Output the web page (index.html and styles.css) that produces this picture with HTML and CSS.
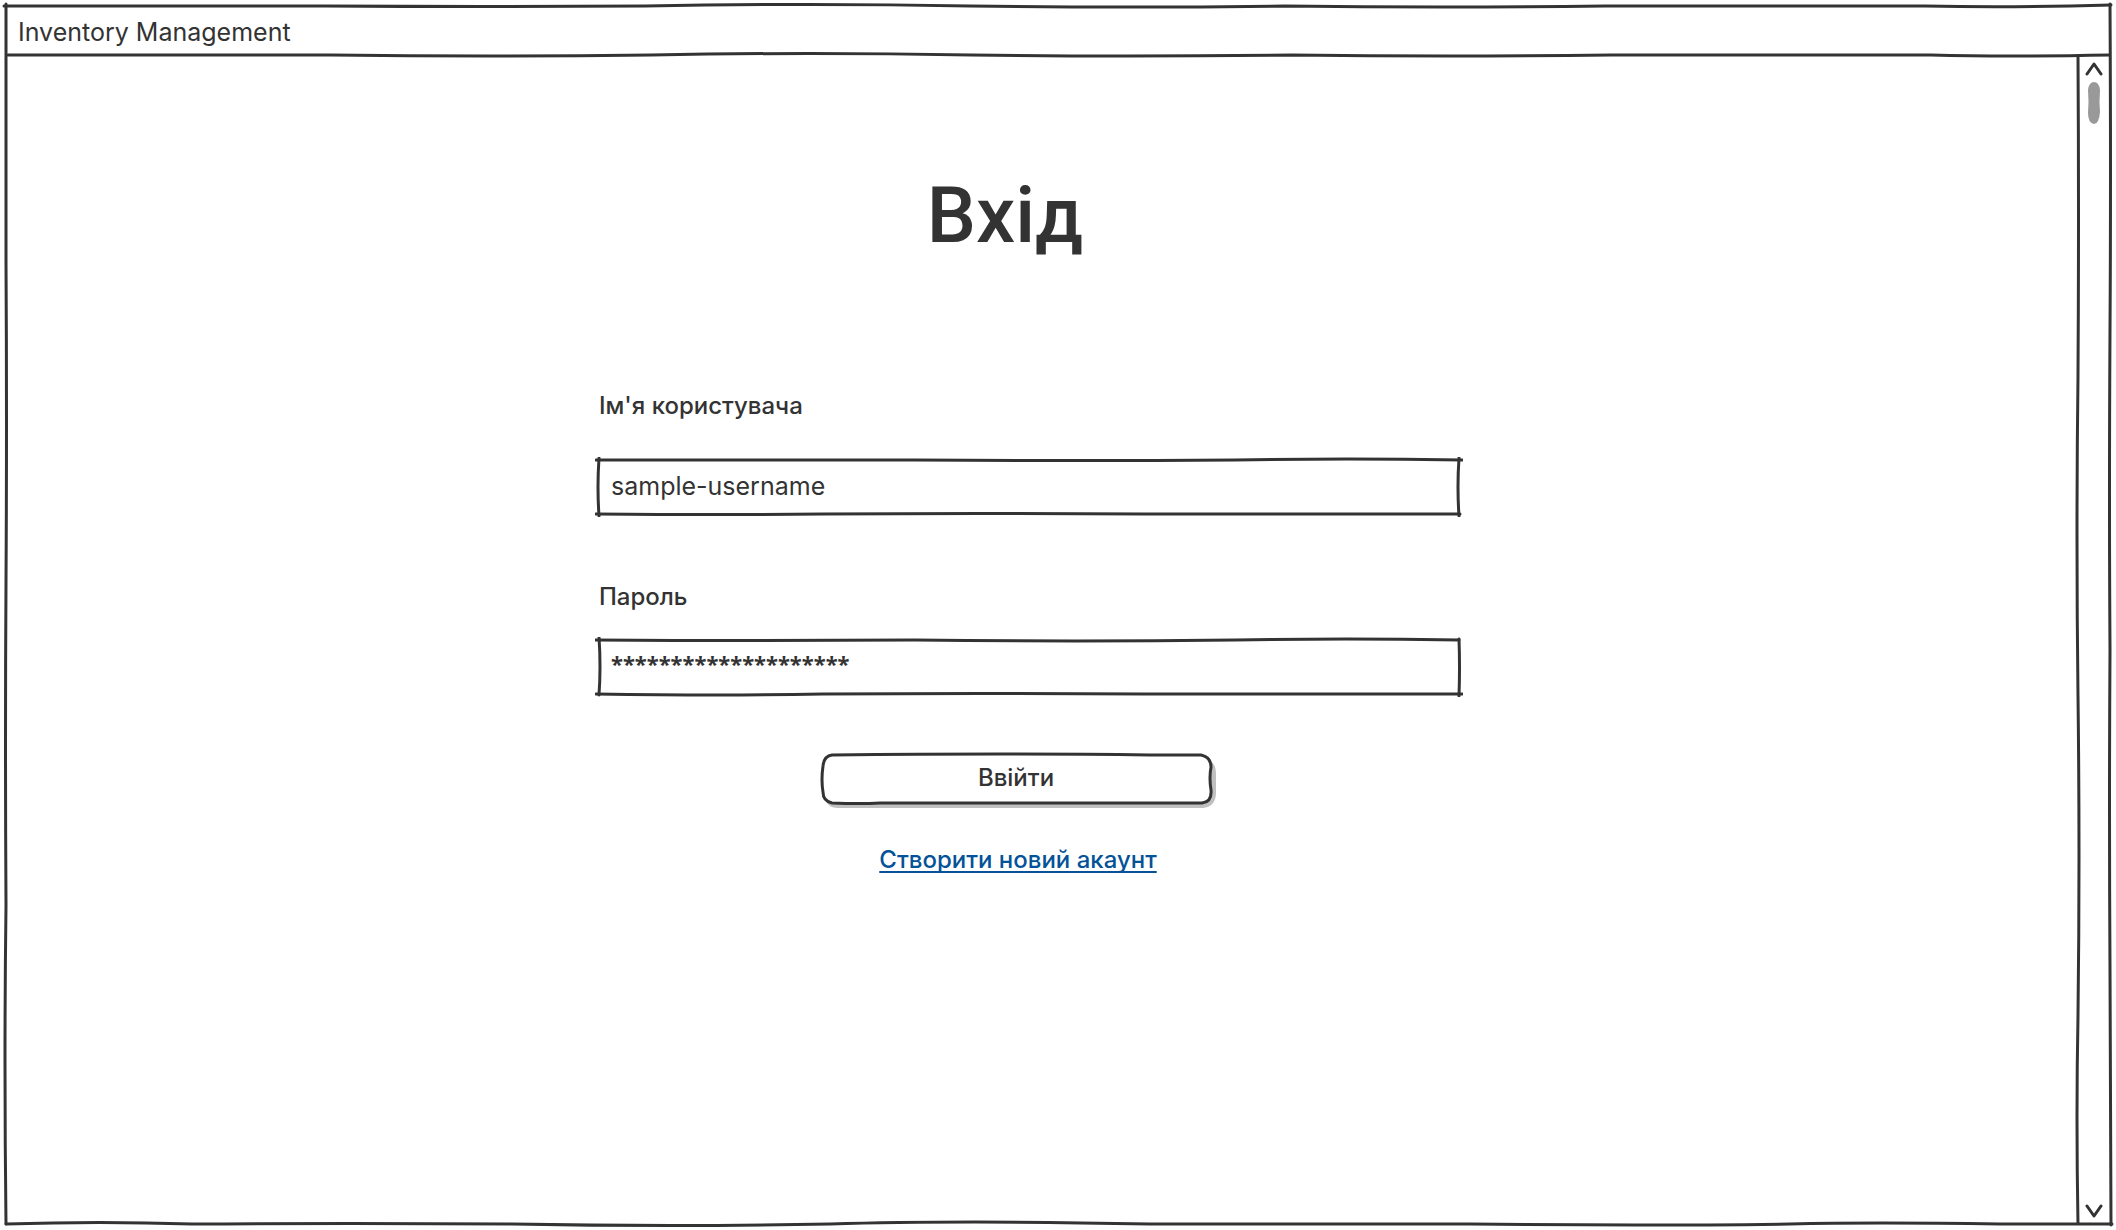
FILE: index.html
```html
<!DOCTYPE html>
<html lang="uk">
<head>
<meta charset="utf-8">
<meta name="viewport" content="width=device-width, initial-scale=1">
<title>Inventory Management</title>
<link rel="stylesheet" href="styles.css">
</head>
<body>
<div class="window">
  <svg class="sketch" viewBox="0 0 2116 1230" preserveAspectRatio="none" aria-hidden="true">
    <path d="M4 6 L325 6 Q480 7 645 6 Q810 3 970 6 Q1130 8 1285 6 Q1440 8 1605 6 L1925 6 Q2010 8 2111 5"/>
    <path d="M6 4 L6 262 Q7 420 6 582 Q5 740 6 905 Q4 1060 6 1224"/>
    <path d="M2110 4 Q2111 180 2110 330 Q2109 500 2110 650 Q2109 810 2110 970 L2111 1225"/>
    <path d="M6 1224 Q100 1221 192 1224 Q350 1223 512 1224 Q670 1227 830 1224 Q960 1220 1150 1224 L1470 1224 Q1640 1226 1790 1224 Q1870 1222 2000 1224 L2112 1224"/>
  </svg>
  <header class="titlebar">
    <span class="app-name">Inventory Management</span>
    <svg class="rule" viewBox="0 0 2104 6" preserveAspectRatio="none" aria-hidden="true">
      <path d="M2 3 L325 3 Q480 5 645 3 Q800 0 965 3 Q1120 5 1285 3 Q1440 5 1605 3 L1925 3 Q2000 5 2104 3"/>
    </svg>
  </header>
  <div class="body">
    <main class="content">
      <form class="login">
        <h1 class="heading">Вхід</h1>
        <label class="label" for="username">Ім'я користувача</label>
        <div class="field">
          <svg class="sketch" viewBox="0 0 868 60" preserveAspectRatio="none" aria-hidden="true">
            <path d="M1 3 L320 3 Q480 4 640 3 Q750 1 867 3"/>
            <path d="M1 57 Q130 58 228 57 Q380 56 550 57 L865 57"/>
            <path d="M4 1 Q2 30 4 59"/>
            <path d="M864 1 Q862 30 864 59"/>
          </svg>
          <input class="input" id="username" type="text" value="sample-username">
        </div>
        <label class="label label-tight" for="password">Пароль</label>
        <div class="field field-last">
          <svg class="sketch" viewBox="0 0 868 60" preserveAspectRatio="none" aria-hidden="true">
            <path d="M0 3 Q160 4 320 3 Q480 5 640 3 Q750 1 864 3"/>
            <path d="M1 57 Q130 59 228 57 Q380 56 550 57 L867 57"/>
            <path d="M4 0 Q6 30 4 58"/>
            <path d="M864 2 Q865 30 864 59"/>
          </svg>
          <input class="input masked" id="password" type="text" value="********************">
        </div>
        <div class="actions">
          <button class="submit" type="submit">
            <svg class="sketch" viewBox="0 0 396 56" preserveAspectRatio="none" aria-hidden="true">
              <path class="shadow" d="M14 7 H384 Q396 8 396 22 V42 Q395 55 383 56 H18 Q8 56 6 48 Z"/>
              <path class="outline" d="M12 3 Q190 1 330 3 L381 3 Q391 5 391 15 Q389 26 391 38 Q392 50 382 51 L60 51 Q40 52 12 51 Q3 49 3 40 Q1 28 3 14 Q4 4 12 3 Z"/>
            </svg>
            <span class="caption">Ввійти</span>
          </button>
          <a class="link" href="#register">Створити новий акаунт</a>
        </div>
      </form>
    </main>
    <div class="scrollbar" aria-hidden="true">
      <svg class="divider" viewBox="0 0 6 1168" preserveAspectRatio="none">
        <path d="M3 0 Q4 160 3 320 Q1 480 3 640 Q5 800 3 960 Q1 1060 3 1168"/>
      </svg>
      <svg class="arrow" viewBox="0 0 18 14"><path d="M2 12 L9 2 L16 12"/></svg>
      <svg class="thumb" viewBox="0 0 12 42"><path d="M0 8 Q1 0 6 0 Q11 0 12 8 Q11 20 12 30 Q11 42 6 42 Q0 41 0 31 Q1 20 0 8 Z"/></svg>
      <svg class="arrow down" viewBox="0 0 18 14"><path d="M2 2 L9 12 L16 2"/></svg>
    </div>
  </div>
</div>
</body>
</html>
```
FILE: styles.css
```css
* {
  box-sizing: border-box;
}

body {
  margin: 0;
  background: #fff;
  color: #333;
  font-family: Inter, "Noto Sans", sans-serif;
  font-size: 24px;
  font-weight: 500;
  line-height: 32px;
}

.window {
  position: relative;
  display: flex;
  flex-direction: column;
  min-height: 100vh;
  padding: 6px;
}

.sketch {
  position: absolute;
  inset: 0;
  width: 100%;
  height: 100%;
  pointer-events: none;
}

svg path {
  fill: none;
  stroke: #333;
  stroke-width: 3px;
  stroke-linecap: round;
  stroke-linejoin: round;
  vector-effect: non-scaling-stroke;
}

.titlebar {
  display: flex;
  flex-direction: column;
}

.app-name {
  padding: 10px 12px 4px;
  font-size: 25px;
  font-weight: 400;
}

.rule {
  width: 100%;
  height: 6px;
}

.body {
  display: flex;
  flex: 1;
  margin-top: -2px;
}

.content {
  flex: 1;
  padding: 112px 50px 40px 24px;
}

.login {
  display: flex;
  flex-direction: column;
  width: 868px;
  max-width: 100%;
  margin: 0 auto;
}

.heading {
  margin: 0 0 126px;
  padding-right: 48px;
  font-family: Roboto, "Noto Sans", sans-serif;
  font-size: 78px;
  font-weight: 500;
  line-height: 96px;
  text-align: center;
}

.label {
  padding-left: 4px;
  margin-bottom: 35px;
}

.label-tight {
  margin-bottom: 24px;
}

.field {
  position: relative;
  height: 60px;
  margin-bottom: 64px;
}

.field-last {
  margin-bottom: 55px;
}

.input {
  position: relative;
  width: 100%;
  height: 100%;
  padding: 0 16px 2px;
  border: 0;
  background: transparent;
  color: inherit;
  font: inherit;
  font-size: 25px;
  font-weight: 400;
}

.masked {
  padding-bottom: 8px;
  font-family: "Noto Sans", sans-serif;
  font-size: 22px;
  font-weight: 700;
}

.actions {
  display: flex;
  flex-direction: column;
  align-items: center;
  gap: 36px;
  padding-right: 22px;
}

.submit {
  position: relative;
  width: 396px;
  height: 56px;
  padding: 0 4px 4px 0;
  border: 0;
  background: transparent;
  color: inherit;
  font: inherit;
}

.submit .shadow {
  fill: #bfbfbf;
  stroke: none;
}

.submit .outline {
  fill: #fff;
}

.caption {
  position: relative;
}

.link {
  color: #045297;
  text-decoration-thickness: 2px;
  text-decoration-skip-ink: none;
  text-underline-offset: 3px;
}

.scrollbar {
  position: relative;
  display: flex;
  flex-direction: column;
  align-items: center;
  width: 32px;
  padding: 6px 0;
}

.divider {
  position: absolute;
  top: 0;
  left: -3px;
  width: 6px;
  height: 100%;
}

.arrow {
  width: 18px;
  height: 14px;
}

.thumb {
  width: 12px;
  height: 42px;
  margin-top: 6px;
}

.thumb path {
  fill: #999;
  stroke: none;
}

.down {
  margin-top: auto;
}
```
